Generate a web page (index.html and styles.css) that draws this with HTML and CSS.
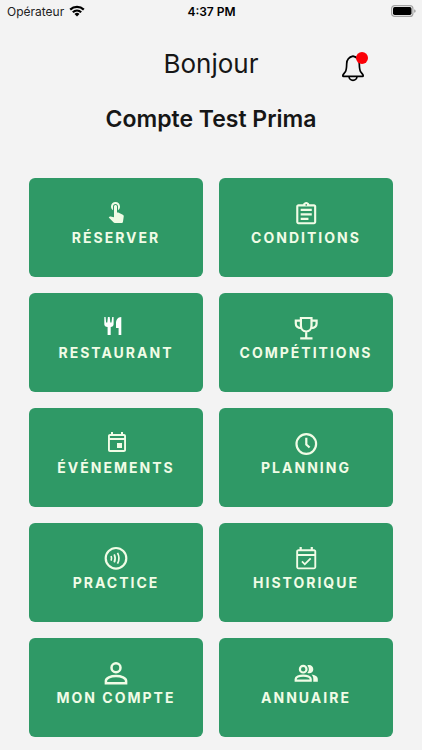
FILE: index.html
```html
<!DOCTYPE html>
<html lang="fr">
<head>
<meta charset="utf-8">
<meta name="viewport" content="width=device-width, initial-scale=1">
<title>Bonjour</title>
<link rel="stylesheet" href="styles.css">
</head>
<body>
<div class="status">
  <div class="carrier">
    <span>Opérateur</span>
    <svg class="wifi" viewBox="0 0 16 12" aria-hidden="true"><path d="M1.200 4.600a9.800 9.800 0 0 1 13.600 0M3.800 7.200a6.200 6.200 0 0 1 8.400 0" fill="none" stroke="#000" stroke-width="2.200"/><path d="M8 11.500 5.500 8.900a3.700 3.700 0 0 1 5 0z"/></svg>
  </div>
  <time class="clock">4:37 PM</time>
  <svg class="battery" viewBox="0 0 25 12" aria-hidden="true"><rect x=".6" y=".6" width="21.300" height="10.800" rx="3" fill="none" stroke="#a5a5a5" stroke-width="1.200"/><rect x="2" y="2" width="18.500" height="8" rx="1.700"/><path d="M23.300 4.200c1.700.5 1.700 3.100 0 3.600z" fill="#8c8c8c"/></svg>
</div>
<header class="header">
  <h1 class="hello">Bonjour</h1>
  <button class="bell" type="button" aria-label="Notifications">
    <svg viewBox="0 0 24 28" aria-hidden="true"><path d="M12 2.200c-3.900.9-6.200 3.700-6.300 7.600-.1 4.300-.4 6.800-1.500 8.300C3 19.700 1.800 20.600 1.800 21.700c0 .5.300.7.800.7h18.800c.5 0 .8-.2.800-.7 0-1.100-1.200-2-2.400-3.600-1.100-1.500-1.400-4-1.500-8.300-.1-3.900-2.400-6.700-6.300-7.600zM8 22.500a4 3.900 0 0 0 8 0" fill="none" stroke="#000" stroke-width="1.700" stroke-linejoin="round"/></svg>
    <span class="dot"></span>
  </button>
  <p class="name">Compte Test Prima</p>
</header>
<main class="tiles">
  <button class="tile" type="button">
    <svg class="icon" viewBox="0 2 24 24" aria-hidden="true"><path d="M9 11.240V7.500C9 6.120 10.120 5 11.500 5S14 6.120 14 7.500v3.740c1.210-.81 2-2.180 2-3.740C16 5.010 13.990 3 11.500 3S7 5.010 7 7.500c0 1.560.79 2.930 2 3.740zm9.840 4.630l-4.540-2.260c-.17-.07-.35-.11-.54-.11H13v-6c0-.83-.67-1.500-1.500-1.500S10 6.670 10 7.500v10.740l-3.430-.72c-.08-.01-.15-.03-.24-.03-.31 0-.59.13-.79.33l-.79.8 4.940 4.940c.27.27.65.44 1.060.44h6.790c.75 0 1.330-.55 1.440-1.280l.75-5.270c.01-.07.02-.14.02-.2 0-.62-.38-1.160-.91-1.380z"/></svg>
    <span>RÉSERVER</span>
  </button>
  <button class="tile" type="button">
    <svg class="icon" viewBox="1 0 21.600 21.600" aria-hidden="true"><path d="M7 15h7v2H7zm0-4h10v2H7zm0-4h10v2H7zm12-4h-4.180C14.400 1.840 13.300 1 12 1s-2.400.84-2.820 2H5c-1.100 0-2 .9-2 2v14c0 1.100.9 2 2 2h14c1.100 0 2-.9 2-2V5c0-1.100-.9-2-2-2zm-7-.25c.41 0 .75.34.75.75s-.34.75-.75.75-.75-.34-.75-.75.34-.75.75-.75zM19.100 19.100H4.900V4.900h14.200z"/></svg>
    <span>CONDITIONS</span>
  </button>
  <button class="tile" type="button">
    <svg class="icon white" viewBox="0 0 24 24" aria-hidden="true"><path d="M.3 1h1.300l.5 5.500h1.200L3.900 1h1.800l.6 5.500h1.200L8.200 1h1.400v7.200c0 1.500-1.200 2.600-2.900 2.900V19H3.600v-7.900C1.500 10.900.3 9.700.3 8.200zM17.300 1v18h-2.700v-7H12V7.500C12 4 13.500 1.200 17.300 1z"/></svg>
    <span>RESTAURANT</span>
  </button>
  <button class="tile" type="button">
    <svg class="icon line" viewBox="0 0 24 24" aria-hidden="true"><path d="M6.900 2h10.600v7.500c0 3.700-2.200 6-5.300 6s-5.300-2.300-5.300-6zM6.900 4.700H1.800v2.800c0 3 2.200 4.400 5.300 4.600M17.500 4.700h5.100v2.800c0 3-2.200 4.400-5.300 4.600M12.200 15.500v6.700M6.200 22.300h12.300"/></svg>
    <span>COMPÉTITIONS</span>
  </button>
  <button class="tile" type="button">
    <svg class="icon" viewBox="-1 1 24 24" aria-hidden="true"><path d="M19 4h-1V2h-2v2H8V2H6v2H5c-1.110 0-2 .9-2 2v14c0 1.100.89 2 2 2h14c1.100 0 2-.9 2-2V6c0-1.100-.9-2-2-2zm.1 16.100H4.900V9.900h14.200zm0-12.100H4.900V5.900h14.200zM12 13h5v5h-5z"/></svg>
    <span>ÉVÉNEMENTS</span>
  </button>
  <button class="tile" type="button">
    <svg class="icon line" viewBox="0 0 24 24" aria-hidden="true"><circle cx="12.300" cy="13" r="9.800"/><path d="M12.300 6.800v6.800l3.300 2.900"/></svg>
    <span>PLANNING</span>
  </button>
  <button class="tile" type="button">
    <svg class="icon line" viewBox="0 0 24 24" aria-hidden="true"><circle cx="12" cy="12.300" r="10.300"/><path d="M7.100 10q1 2.300 0 4.600M10.200 8.300q2 4 0 8M13.500 6.900q3 5.400 0 10.800" stroke-width="1.700"/></svg>
    <span>PRACTICE</span>
  </button>
  <button class="tile" type="button">
    <svg class="icon" viewBox="1 1 21.600 21.600" aria-hidden="true"><path d="M19 4h-1V2h-2v2H8V2H6v2H5c-1.110 0-2 .9-2 2v14c0 1.100.89 2 2 2h14c1.100 0 2-.9 2-2V6c0-1.100-.9-2-2-2zm.3 16.300H4.700V10h14.600zm0-12.100H4.700V5.800h14.600zM16.600 12.700l-1.200-1.100-4.700 4.700-2-2-1.100 1.100 3.100 3.100z"/></svg>
    <span>HISTORIQUE</span>
  </button>
  <button class="tile" type="button">
    <svg class="icon line" viewBox="0 0 24 24" aria-hidden="true"><circle cx="12" cy="6.700" r="4.500" stroke-width="2.500"/><path d="M1.900 22.200v-2.400c0-2.900 4.700-4.900 10.100-4.900s10.100 2 10.100 4.900v2.400z" stroke-width="2.500"/></svg>
    <span>MON COMPTE</span>
  </button>
  <button class="tile" type="button">
    <svg class="icon line" viewBox="0 0 24 24" aria-hidden="true"><circle cx="9.200" cy="8.200" r="3.300"/><path d="M1.700 19.700V18c0-2 3.500-3.400 7.500-3.400s7.500 1.400 7.500 3.400v1.700z"/><path d="M13.300 4.400c3.200-1.200 6 .9 6 3.800s-2.800 5-6 3.800c2.100-2.200 2.100-5.400 0-7.600zM17.500 13.600c3.500.6 6.300 2 6.300 4.300v2.800h-4.500v-2.800c0-1.800-.6-3.200-1.800-4.300z" fill="currentColor" stroke="none"/></svg>
    <span>ANNUAIRE</span>
  </button>
</main>
</body>
</html>
```
FILE: styles.css
```css
* {
  box-sizing: border-box;
}

body {
  margin: 0;
  background: #f3f3f3;
  color: #161616;
  font-family: Inter, "Liberation Sans", sans-serif;
}

.status {
  display: grid;
  grid-template-columns: 1fr auto 1fr;
  align-items: center;
  height: 22px;
  padding: 0 6px 0 7px;
  font-size: 12px;
  color: #000;
}

.carrier {
  display: flex;
  align-items: center;
  gap: 5px;
  color: #222;
}

.wifi {
  width: 16px;
  height: 12px;
}

.clock {
  font-weight: 600;
}

.battery {
  justify-self: end;
  width: 25px;
  height: 12px;
}

.header {
  display: grid;
  grid-template-columns: 1fr auto 1fr;
  align-items: center;
  row-gap: 16px;
  padding: 22px 29px 0;
}

.hello {
  grid-column: 2;
  margin: 0;
  font-size: 26px;
  line-height: 40px;
  font-weight: 400;
}

.bell {
  position: relative;
  justify-self: end;
  width: 24px;
  height: 28px;
  margin: 8px 28px 0 0;
  padding: 0;
  border: 0;
  background: none;
}

.bell svg {
  display: block;
  width: 24px;
  height: 28px;
}

.dot {
  position: absolute;
  top: -2px;
  right: -3px;
  width: 12px;
  height: 12px;
  border-radius: 50%;
  background: #fb0007;
}

.name {
  grid-column: 1 / -1;
  margin: 0;
  font-size: 23px;
  line-height: 38px;
  font-weight: 600;
  text-align: center;
}

.tiles {
  display: grid;
  grid-template-columns: 1fr 1fr;
  gap: 16px;
  padding: 40px 29px 13px;
}

.tile {
  display: flex;
  flex-direction: column;
  align-items: center;
  height: 99px;
  padding: 23px 0 0;
  border: 0;
  border-radius: 6px;
  background: #2f9966;
  color: #f1fce6;
  font-family: inherit;
  font-size: 14px;
  line-height: 26px;
  font-weight: 700;
  letter-spacing: 2px;
}

.icon {
  width: 24px;
  height: 24px;
  fill: currentColor;
}

.white {
  color: #fff;
}

.line {
  fill: none;
  stroke: currentColor;
  stroke-width: 2.2;
}
```
